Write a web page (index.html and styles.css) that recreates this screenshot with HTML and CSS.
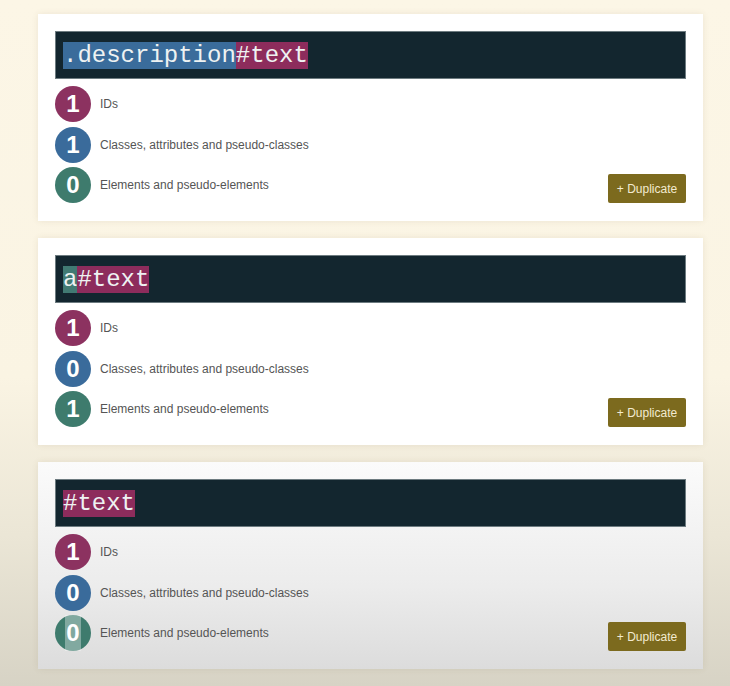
FILE: index.html
```html
<!DOCTYPE html>
<html lang="en">
<head>
<meta charset="utf-8">
<title>Specificity</title>
<link rel="stylesheet" href="styles.css">
</head>
<body>
<main class="stack">
  <section class="card">
    <div class="selector"><span class="hl hl-class">.description</span><span class="hl hl-id">#text</span></div>
    <div class="foot">
      <ul class="counts">
        <li class="row"><span class="badge badge-id">1</span><span class="label">IDs</span></li>
        <li class="row"><span class="badge badge-class">1</span><span class="label">Classes, attributes and pseudo-classes</span></li>
        <li class="row"><span class="badge badge-el">0</span><span class="label">Elements and pseudo-elements</span></li>
      </ul>
      <button class="dup">+ Duplicate</button>
    </div>
  </section>
  <section class="card">
    <div class="selector"><span class="hl hl-el">a</span><span class="hl hl-id">#text</span></div>
    <div class="foot">
      <ul class="counts">
        <li class="row"><span class="badge badge-id">1</span><span class="label">IDs</span></li>
        <li class="row"><span class="badge badge-class">0</span><span class="label">Classes, attributes and pseudo-classes</span></li>
        <li class="row"><span class="badge badge-el">1</span><span class="label">Elements and pseudo-elements</span></li>
      </ul>
      <button class="dup">+ Duplicate</button>
    </div>
  </section>
  <section class="card card-faded">
    <div class="selector"><span class="hl hl-id">#text</span></div>
    <div class="foot">
      <ul class="counts">
        <li class="row"><span class="badge badge-id">1</span><span class="label">IDs</span></li>
        <li class="row"><span class="badge badge-class">0</span><span class="label">Classes, attributes and pseudo-classes</span></li>
        <li class="row"><span class="badge badge-el"><span class="sel">0</span></span><span class="label">Elements and pseudo-elements</span></li>
      </ul>
      <button class="dup">+ Duplicate</button>
    </div>
  </section>
</main>
</body>
</html>
```

FILE: styles.css
```css
* { box-sizing: border-box; }
html, body { height: 100%; }
body {
  margin: 0;
  font-family: "Liberation Sans", Arial, sans-serif;
  background: linear-gradient(180deg, #fcf6e6 0%, #faf4e3 55%, #ebe6d6 78%, #d7d3c5 100%);
}
.stack {
  display: flex;
  flex-direction: column;
  gap: 17px;
  padding: 14px 0 0 38px;
  width: 703px;
}
.card {
  background: #ffffff;
  padding: 17px;
  height: 207px;
  box-shadow: 0 0 6px rgba(120, 100, 60, 0.12);
}
.card-faded {
  background: linear-gradient(180deg, #fbfbfb 0%, #ececec 60%, #dcdcdc 100%);
}
.selector {
  height: 48px;
  background: #13262f;
  border: 1px solid #6d7b80;
  display: flex;
  align-items: center;
  padding-left: 7px;
  font-family: "Liberation Mono", "Courier New", monospace;
  font-size: 24px;
  color: #eef2f2;
}
.hl { line-height: 27px; display: inline-block; }
.hl-class { background: #3a6c9b; }
.hl-id { background: #8d2c5c; }
.hl-el { background: #417a73; }
.foot {
  display: flex;
  justify-content: space-between;
  align-items: flex-end;
  margin-top: 7px;
}
.counts {
  list-style: none;
  margin: 0;
  padding: 0;
  display: flex;
  flex-direction: column;
  gap: 4.5px;
}
.row {
  display: flex;
  align-items: center;
  gap: 9px;
  height: 36px;
}
.badge {
  width: 36px;
  height: 36px;
  border-radius: 50%;
  display: flex;
  align-items: center;
  justify-content: center;
  color: #ffffff;
  font-weight: bold;
  font-size: 24px;
}
.badge-id { background: #8c3260; }
.badge-class { background: #3a6b9b; }
.badge-el { background: #3e7b6d; }
.sel {
  display: flex;
  align-items: center;
  height: 36px;
  padding: 0 1px;
  background: rgba(255, 255, 255, 0.35);
}
.label {
  font-size: 12px;
  color: #555555;
}
.dup {
  width: 78px;
  height: 29px;
  border: none;
  border-radius: 2px;
  background: #7c6a1e;
  color: #f3ead0;
  font-family: "Liberation Sans", Arial, sans-serif;
  font-size: 12px;
  padding: 0;
}
```
